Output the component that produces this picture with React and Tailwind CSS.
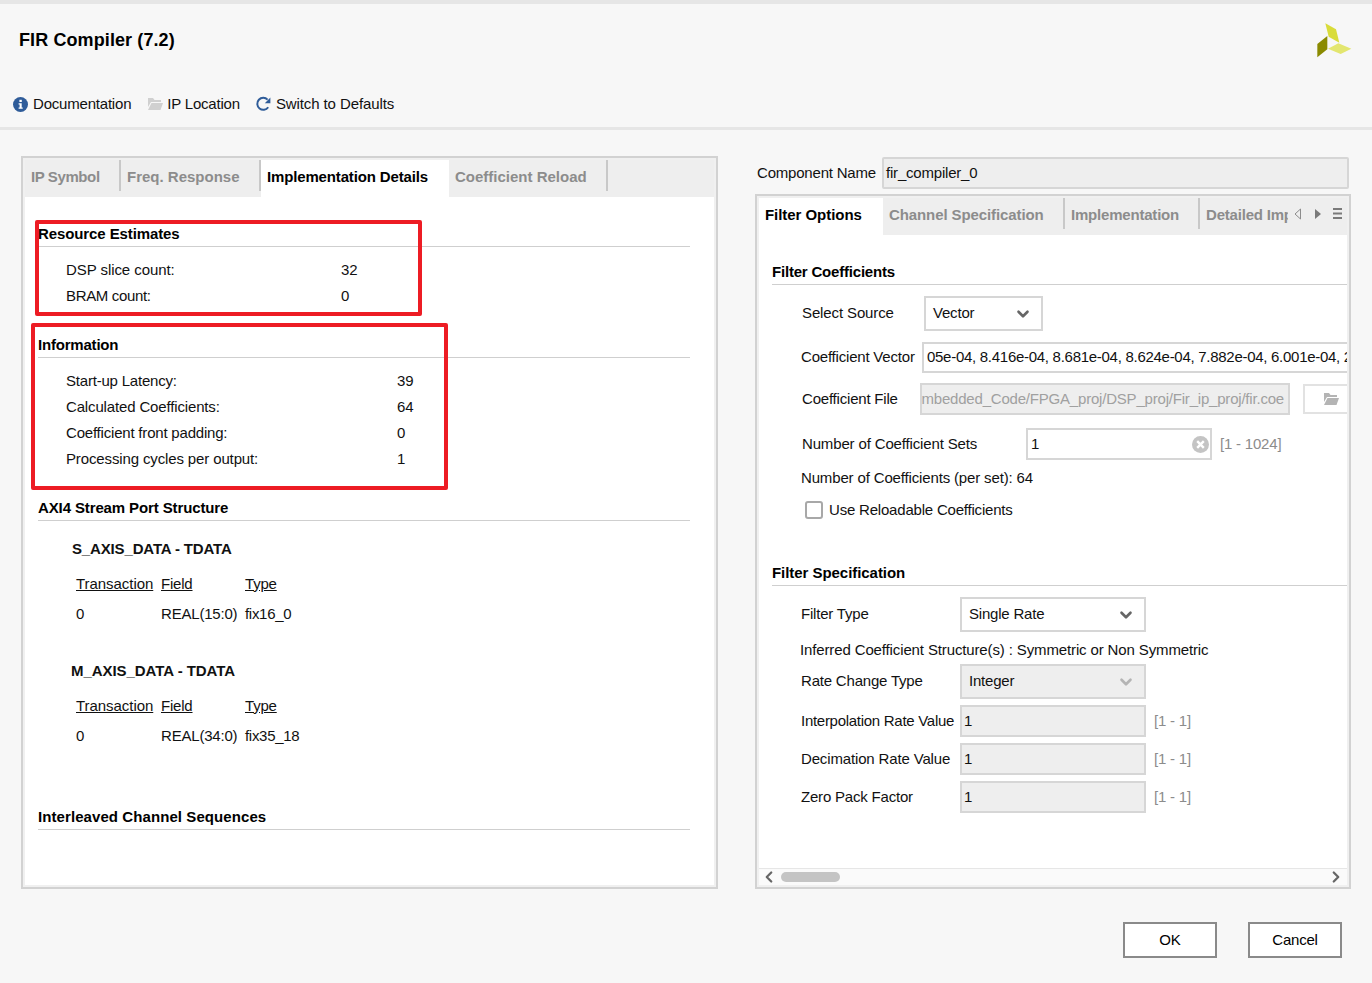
import { ChevronDown, ChevronLeft, ChevronRight } from 'lucide-react';

const InfoIcon = () => (
  <svg width="15" height="15" viewBox="0 0 15 15" className="shrink-0">
    <circle cx="7.5" cy="7.5" r="7.5" fill="#2f5c99" />
    <rect x="6.4" y="2.8" width="2.4" height="2.2" fill="#fff" />
    <path d="M5.6 6.2h3.1v4.4h1v1.2H5.6v-1.2h1V7.4h-1z" fill="#fff" />
  </svg>
);

const FolderIcon = ({ color = '#d0d0d0' }) => (
  <svg width="16" height="14" viewBox="0 0 16 14" className="shrink-0">
    <path d="M1 1h5l1.5 2H14v2H4L1 10z" fill={color} />
    <path d="M4.5 6H16l-2.5 7H1z" fill={color} />
  </svg>
);

const RefreshIcon = () => (
  <svg width="16" height="16" viewBox="0 0 16 16" className="shrink-0">
    <path d="M13.2 11.2A6 6 0 1 1 12.6 3.6" fill="none" stroke="#2f5c99" strokeWidth="2" />
    <path d="M15.4 1.6v5.6H9.8z" fill="#2f5c99" />
  </svg>
);

const ClearIcon = () => (
  <svg width="17" height="17" viewBox="0 0 17 17" className="shrink-0">
    <circle cx="8.5" cy="8.5" r="8.5" fill="#c4c4c4" />
    <path d="M5.2 5.2l6.6 6.6M11.8 5.2l-6.6 6.6" stroke="#fff" strokeWidth="2.4" />
  </svg>
);

const Logo = () => (
  <svg width="36" height="36" viewBox="138 66 108 108">
    <polygon points="166,70 198,88 208,128 176,110" fill="#d9dc3a" />
    <polygon points="172,108 172,148 142,172 142,132" fill="#8a8a00" />
    <polygon points="205,130 244,146 212,162 174,146" fill="#e3e66f" />
  </svg>
);

const Tab = ({ label, width, active, sep, track = 'tracking-normal' }) => (
  <div className={`flex shrink-0 justify-between overflow-hidden ${width} ${active ? 'bg-white text-black' : 'text-[#8c8c8c]'}`}>
    <span className={`pl-[6px] pt-[7px] text-[15px] leading-[20px] font-bold whitespace-nowrap ${track}`}>{label}</span>
    {sep && <div className="h-[31px] w-[2px] shrink-0 bg-[#c8c8c8]"></div>}
  </div>
);

const LeftTitle = ({ children, className }) => (
  <div className={`ml-[13px] w-[652px] h-[23px] border-b border-[#cfcfcf] text-[15px] leading-[20px] font-bold text-black ${className}`}>
    {children}
  </div>
);

const StatRow = ({ label, value, valueLeft, track }) => (
  <div className="ml-[41px] flex h-[26px] items-center">
    <span className={`shrink-0 ${valueLeft} ${track}`}>{label}</span>
    <span>{value}</span>
  </div>
);

const PortTable = ({ name, nameClass, field, type }) => (
  <div>
    <div className={`font-bold h-[20px] leading-[20px] ${nameClass}`}>{name}</div>
    <div className="ml-[51px] mt-[15px] flex h-[20px] items-center underline">
      <span className="w-[85px] shrink-0 tracking-[-0.05px]">Transaction</span>
      <span className="w-[84px] shrink-0">Field</span>
      <span>Type</span>
    </div>
    <div className="ml-[51px] mt-[10px] flex h-[20px] items-center">
      <span className="w-[85px] shrink-0">0</span>
      <span className="w-[84px] shrink-0">{field}</span>
      <span className="tracking-[-0.3px]">{type}</span>
    </div>
  </div>
);

const RightTitle = ({ children, className }) => (
  <div className={`ml-[13px] border-b border-[#cfcfcf] font-bold text-[15px] leading-[20px] text-black ${className}`}>
    {children}
  </div>
);

const Select = ({ value, width, disabled }) => (
  <div className={`flex h-full shrink-0 items-center justify-between border-2 border-[#d6d6d6] pl-[7px] pr-[9px] ${width} ${disabled ? 'bg-[#eeeeee]' : 'bg-white'}`}>
    <span>{value}</span>
    <ChevronDown size={18} strokeWidth={3.5} color={disabled ? '#b4b4b4' : '#666666'} />
  </div>
);

const DisabledRow = ({ label, track }) => (
  <div className="mt-[6px] flex h-[32px] items-center">
    <span className={`ml-[42px] w-[159px] shrink-0 ${track}`}>{label}</span>
    <div className="flex h-full w-[186px] shrink-0 items-center border-2 border-[#d6d6d6] bg-[#eeeeee] pl-[2px]">1</div>
    <span className="ml-[8px] text-[#8c8c8c]">[1 - 1]</span>
  </div>
);

export default function App() {
  return (
    <div className="flex h-[983px] w-full flex-col overflow-hidden bg-[#f7f7f7] font-['Liberation_Sans',Arial,sans-serif] text-[15px] tracking-[-0.2px] text-[#111]">
      {/* Top strip and header */}
      <div className="h-1 bg-[#e6e6e6]"></div>
      <div className="flex items-start justify-between pr-[20px]">
        <div className="ml-[19px] mt-[24px] text-[18px] leading-[24px] font-bold tracking-[0.1px] text-black">FIR Compiler (7.2)</div>
        <div className="mt-[18px]"><Logo /></div>
      </div>
      <div className="ml-[13px] mt-[36px] flex h-[20px] items-center">
        <InfoIcon />
        <span className="ml-[5px]">Documentation</span>
        <span className="ml-[16px]"><FolderIcon /></span>
        <span className="ml-[4px]">IP Location</span>
        <span className="ml-[15px]"><RefreshIcon /></span>
        <span className="ml-[5px] tracking-[-0.1px]">Switch to Defaults</span>
      </div>
      <div className="mt-[13px] h-[3px] bg-[#e6e6e6]"></div>

      {/* Main panels */}
      <div className="flex items-start">
        <div className="relative ml-[21px] mt-[26px] flex h-[733px] w-[697px] shrink-0 flex-col border-2 border-[#d2d2d2] bg-[#f0f0f0] p-[2px]">
          <div className="flex h-[37px] shrink-0 bg-[#eeeeee]">
            <Tab label="IP Symbol" width="w-[96px]" sep track="tracking-[-0.4px]" />
            <Tab label="Freq. Response" width="w-[140px]" sep />
            <Tab label="Implementation Details" width="w-[188px]" active track="tracking-[-0.15px]" />
            <Tab label="Coefficient Reload" width="w-[159px]" sep />
          </div>
          <div className="flex-1 bg-white">
            <LeftTitle className="mt-[27px] tracking-[-0.1px]">Resource Estimates</LeftTitle>
            <div className="mt-[10px]">
              <StatRow label="DSP slice count:" value="32" valueLeft="w-[275px]" track="tracking-[-0.07px]" />
              <StatRow label="BRAM count:" value="0" valueLeft="w-[275px]" track="tracking-[-0.35px]" />
            </div>
            <LeftTitle className="mt-[26px]">Information</LeftTitle>
            <div className="mt-[10px]">
              <StatRow label="Start-up Latency:" value="39" valueLeft="w-[331px]" />
              <StatRow label="Calculated Coefficients:" value="64" valueLeft="w-[331px]" track="tracking-[-0.15px]" />
              <StatRow label="Coefficient front padding:" value="0" valueLeft="w-[331px]" />
              <StatRow label="Processing cycles per output:" value="1" valueLeft="w-[331px]" track="tracking-[-0.13px]" />
            </div>
            <LeftTitle className="mt-[26px] tracking-[-0.12px]">AXI4 Stream Port Structure</LeftTitle>
            <div className="mt-[18px]">
              <PortTable name="S_AXIS_DATA - TDATA" nameClass="ml-[47px] tracking-[-0.15px]" field="REAL(15:0)" type="fix16_0" />
            </div>
            <div className="mt-[37px]">
              <PortTable name="M_AXIS_DATA - TDATA" nameClass="ml-[46px] tracking-[-0.05px]" field="REAL(34:0)" type="fix35_18" />
            </div>
            <LeftTitle className="mt-[61px] tracking-[0.08px]">Interleaved Channel Sequences</LeftTitle>
          </div>

          {/* Red annotation boxes */}
          <div className="absolute left-[12px] top-[62px] h-[96px] w-[387px] rounded-[2px] border-4 border-[#ed1c24]"></div>
          <div className="absolute left-[8px] top-[165px] h-[167px] w-[417px] rounded-[2px] border-4 border-[#ed1c24]"></div>
        </div>

        <div className="ml-[37px] mt-[27px] w-[596px] shrink-0">
          <div className="flex h-[32px] items-center pl-[2px]">
            <span className="w-[125px] shrink-0">Component Name</span>
            <div className="flex h-full w-[467px] items-center rounded-[2px] border-2 border-[#d6d6d6] bg-[#eeeeee] pl-[2px]">fir_compiler_0</div>
          </div>
          <div className="mt-[5px] flex h-[695px] flex-col border-2 border-[#d2d2d2] bg-[#f0f0f0] p-[2px]">
            <div className="flex h-[37px] shrink-0 items-start bg-[#eeeeee]">
              <Tab label="Filter Options" width="w-[124px] h-full" active track="tracking-[-0.05px]" />
              <Tab label="Channel Specification" width="w-[182px]" sep track="tracking-[-0.1px]" />
              <Tab label="Implementation" width="w-[135px]" sep track="tracking-[-0.2px]" />
              <Tab label="Detailed Implementation" width="w-[88px]" track="tracking-[-0.2px]" />
              <div className="ml-[6px] flex h-[31px] items-center">
                <svg width="8" height="12" viewBox="0 0 8 12">
                  <path d="M6.5 1v10L1 6z" fill="none" stroke="#8c8c8c" />
                </svg>
                <svg width="8" height="12" viewBox="0 0 8 12" className="ml-[12px]">
                  <path d="M1 1v10l6-5z" fill="#7a7a7a" />
                </svg>
                <svg width="9" height="11" viewBox="0 0 9 11" className="ml-[11px]">
                  <path d="M0 1h9M0 5.5h9M0 10h9" stroke="#7a7a7a" strokeWidth="2" />
                </svg>
              </div>
            </div>
            <div className="flex min-h-0 flex-1 flex-col overflow-hidden bg-white">
              <div className="min-h-0 flex-1">
                <RightTitle className="mt-[25px] h-[25px] pt-[2px]">Filter Coefficients</RightTitle>
                <div className="mt-[11px] flex h-[35px] items-center">
                  <span className="ml-[43px] w-[122px] shrink-0 tracking-[-0.12px]">Select Source</span>
                  <Select value="Vector" width="w-[119px]" />
                </div>
                <div className="mt-[11px] flex h-[31px] items-center">
                  <span className="ml-[42px] w-[121px] shrink-0">Coefficient Vector</span>
                  <div className="flex h-full w-[440px] shrink-0 items-center overflow-hidden whitespace-nowrap border-2 border-[#d6d6d6] pl-[3px] tracking-[-0.28px]">
                    05e-04, 8.416e-04, 8.681e-04, 8.624e-04, 7.882e-04, 6.001e-04, 2.882e-04
                  </div>
                </div>
                <div className="mt-[10px] flex h-[32px] items-center">
                  <span className="ml-[43px] w-[118px] shrink-0">Coefficient File</span>
                  <div className="flex h-full w-[370px] shrink-0 items-center justify-end overflow-hidden whitespace-nowrap border-2 border-[#d6d6d6] bg-[#eeeeee] pr-[4px] text-[#a0a0a0]">
                    D:/Embedded_Code/FPGA_proj/DSP_proj/Fir_ip_proj/fir.coe
                  </div>
                  <div className="ml-[13px] flex h-[30px] w-[60px] shrink-0 items-center border-2 border-[#e2e2e2] bg-white pl-[18px]">
                    <FolderIcon color="#b4b4b4" />
                  </div>
                </div>
                <div className="mt-[13px] flex h-[32px] items-center">
                  <span className="ml-[43px] w-[224px] shrink-0 tracking-[-0.15px]">Number of Coefficient Sets</span>
                  <div className="flex h-full w-[186px] shrink-0 items-center justify-between border-2 border-[#d6d6d6] pl-[3px] pr-[1px]">
                    <span>1</span>
                    <ClearIcon />
                  </div>
                  <span className="ml-[8px] text-[#8c8c8c]">[1 - 1024]</span>
                </div>
                <div className="ml-[42px] mt-[8px] h-[20px] leading-[20px] tracking-[-0.15px]">Number of Coefficients (per set): 64</div>
                <div className="ml-[46px] mt-[12px] flex h-[20px] items-center">
                  <div className="h-[18px] w-[18px] rounded-[3px] border-2 border-[#a8a8a8] bg-white"></div>
                  <span className="ml-[6px]">Use Reloadable Coefficients</span>
                </div>
                <RightTitle className="mt-[40px] h-[26px] pt-[3px] tracking-[-0.05px]">Filter Specification</RightTitle>
                <div className="mt-[11px] flex h-[35px] items-center">
                  <span className="ml-[42px] w-[159px] shrink-0">Filter Type</span>
                  <Select value="Single Rate" width="w-[186px]" />
                </div>
                <div className="ml-[41px] mt-[8px] h-[20px] leading-[20px] tracking-[-0.13px]">Inferred Coefficient Structure(s) : Symmetric or Non Symmetric</div>
                <div className="mt-[4px] flex h-[35px] items-center">
                  <span className="ml-[42px] w-[159px] shrink-0">Rate Change Type</span>
                  <Select value="Integer" width="w-[186px]" disabled />
                </div>
                <DisabledRow label="Interpolation Rate Value" track="tracking-[-0.28px]" />
                <DisabledRow label="Decimation Rate Value" track="tracking-[-0.15px]" />
                <DisabledRow label="Zero Pack Factor" />
              </div>
              <div className="flex h-[17px] shrink-0 items-center border-t border-[#e6e6e6] bg-[#fafafa] pl-[1px] pr-[2px]">
                <ChevronLeft size={18} strokeWidth={3} color="#666666" />
                <div className="ml-[3px] h-[10px] w-[59px] rounded-[5px] bg-[#c4c4c4]"></div>
                <div className="flex-1"></div>
                <ChevronRight size={18} strokeWidth={3} color="#666666" />
              </div>
            </div>
          </div>
        </div>
      </div>

      {/* Dialog buttons */}
      <div className="mt-[33px] flex justify-end gap-[31px] pr-[30px]">
        <button className="h-[36px] w-[94px] border-2 border-[#8a8a8a] bg-white text-black">OK</button>
        <button className="h-[36px] w-[94px] border-2 border-[#8a8a8a] bg-white text-black">Cancel</button>
      </div>
    </div>
  );
}
